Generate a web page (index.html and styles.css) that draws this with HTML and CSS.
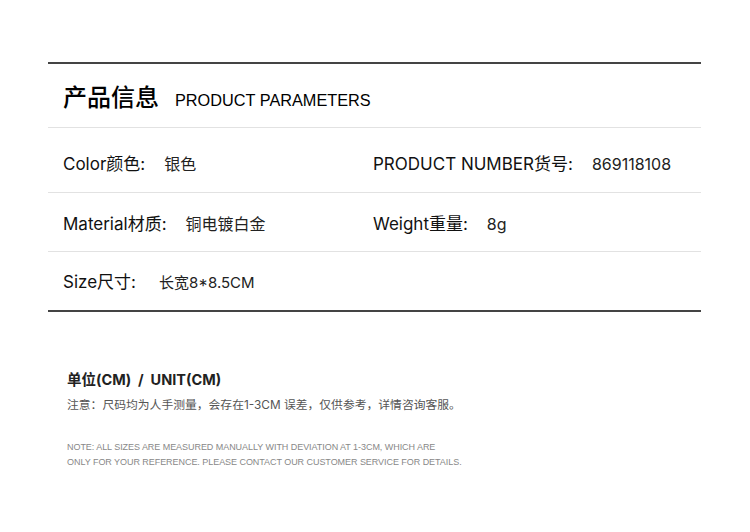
FILE: index.html
```html
<!DOCTYPE html>
<html lang="zh-CN">
<head>
  <meta charset="UTF-8">
  <meta name="viewport" content="width=device-width, initial-scale=1.0">
  <title>产品信息</title>
  <link rel="stylesheet" href="styles.css">
</head>
<body>
  <div class="params">
    <div class="params-head">
      <h1>产品信息</h1>
      <span class="head-en">PRODUCT PARAMETERS</span>
    </div>
    <div class="row row-first">
      <div class="cell"><span class="label">Color颜色:</span><span class="value">银色</span></div>
      <div class="cell"><span class="label">PRODUCT NUMBER货号:</span><span class="value">869118108</span></div>
    </div>
    <div class="row">
      <div class="cell"><span class="label">Material材质:</span><span class="value">铜电镀白金</span></div>
      <div class="cell"><span class="label">Weight重量:</span><span class="value">8g</span></div>
    </div>
    <div class="row row-last">
      <div class="cell"><span class="label">Size尺寸:</span><span class="value small">长宽8*8.5CM</span></div>
      <div class="cell"></div>
    </div>
  </div>

  <div class="notes">
    <h2>单位(CM) &nbsp;/&nbsp; UNIT(CM)</h2>
    <p class="note-cn">注意：尺码均为人手测量，会存在1-3CM 误差，仅供参考，详情咨询客服。</p>
    <p class="note-en">NOTE: ALL SIZES ARE MEASURED MANUALLY WITH DEVIATION AT 1-3CM, WHICH ARE<br>ONLY FOR YOUR REFERENCE. PLEASE CONTACT OUR CUSTOMER SERVICE FOR DETAILS.</p>
  </div>
</body>
</html>
```

FILE: styles.css
```css
body {
  margin: 0;
  background-color: #fff;
  color: #111;
  font-family: Inter, "Noto Sans CJK SC", sans-serif;
}
.params {
  margin: 62px 49px 0 48px;
  border-top: 2px solid #444;
  border-bottom: 2px solid #444;
}
.params-head {
  height: 64px;
  display: flex;
  align-items: baseline;
  padding: 14px 0 0 15px;
  border-bottom: 1px solid #e2e2e2;
  box-sizing: border-box;
}
h1 {
  margin: 0;
  font-family: "Noto Sans CJK SC", sans-serif;
  font-size: 24px;
  font-weight: 500;
  color: #000;
}
.head-en {
  margin-left: 16px;
  font-family: "Liberation Sans", Arial, sans-serif;
  font-size: 16.3px;
  color: #000;
}
.row {
  display: grid;
  grid-template-columns: 310px 1fr;
  align-items: center;
  height: 58px;
  padding-left: 15px;
  border-bottom: 1px solid #e2e2e2;
}
.row-first {
  height: 65px;
  padding-top: 4px;
  box-sizing: border-box;
}
.row-last {
  height: 58px;
  padding-bottom: 2px;
  box-sizing: border-box;
  border-bottom: none;
}
.cell {
  display: flex;
  align-items: baseline;
  gap: 19px;
}
.label {
  font-size: 17px;
  color: #111;
}
.value {
  font-size: 16px;
  color: #222;
}
.value.small {
  margin-left: 4px;
  font-size: 15px;
}
.notes {
  padding: 56px 0 0 67px;
}
h2 {
  margin: 0;
  font-size: 14.5px;
  font-weight: 700;
  color: #222;
}
.note-cn {
  margin: 6px 0 0;
  font-size: 11.8px;
  color: #555;
}
.note-en {
  margin: 28px 0 0;
  font-family: "Liberation Sans", Arial, sans-serif;
  font-size: 9px;
  line-height: 15px;
  letter-spacing: -0.05px;
  color: #888;
}
```
